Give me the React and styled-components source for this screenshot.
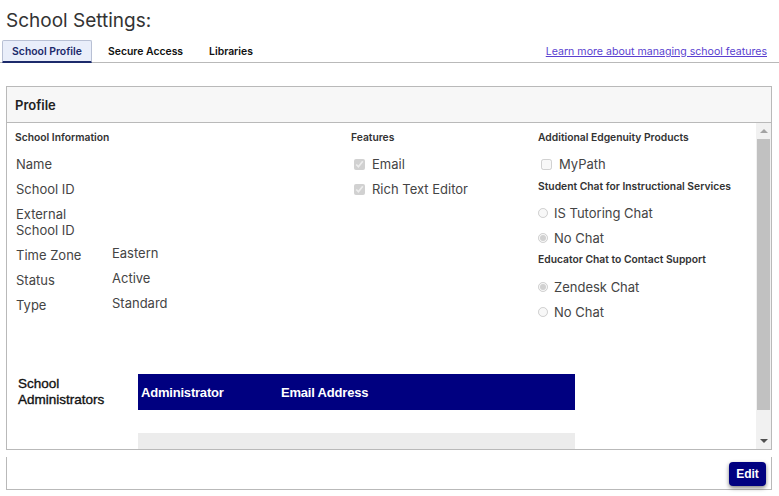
import styled, { createGlobalStyle } from 'styled-components';

const GlobalStyle = createGlobalStyle`
    html, body {
        margin: 0;
        padding: 0;
        background: #ffffff;
        font-family: 'Inter', 'Liberation Sans', sans-serif;
        color: #333333;
    }
`

const infoRows = [
    { label: 'Name', value: '' },
    { label: 'School ID', value: '' },
    { label: 'External School ID', value: '', wrap: true },
    { label: 'Time Zone', value: 'Eastern' },
    { label: 'Status', value: 'Active' },
    { label: 'Type', value: 'Standard' },
]

export default function App() {
    return (
        <>
            <GlobalStyle />
            <Page>
                <Title>School Settings:</Title>
                <TabBar>
                    <Tabs>
                        <Tab active>School Profile</Tab>
                        <Tab>Secure Access</Tab>
                        <Tab>Libraries</Tab>
                    </Tabs>
                    <LearnLink href="#">Learn more about managing school features</LearnLink>
                </TabBar>

                <Panel>
                    <PanelHeader>Profile</PanelHeader>
                    <PanelBody>
                        <Content>
                            <Columns>
                                <Column>
                                    <Heading>School Information</Heading>
                                    {infoRows.map(row => (
                                        <InfoRow key={row.label}>
                                            <Label wrap={row.wrap}>{row.label}</Label>
                                            <Value>{row.value}</Value>
                                        </InfoRow>
                                    ))}
                                </Column>
                                <Column>
                                    <Heading>Features</Heading>
                                    <Option>
                                        <Check type="checkbox" checked disabled readOnly />
                                        Email
                                    </Option>
                                    <Option>
                                        <Check type="checkbox" checked disabled readOnly />
                                        Rich Text Editor
                                    </Option>
                                </Column>
                                <Column>
                                    <Heading>Additional Edgenuity Products</Heading>
                                    <Option>
                                        <Check type="checkbox" disabled readOnly />
                                        MyPath
                                    </Option>
                                    <Heading gap={7}>Student Chat for Instructional Services</Heading>
                                    <Option gap={12}>
                                        <Radio type="radio" name="is" disabled readOnly />
                                        IS Tutoring Chat
                                    </Option>
                                    <Option>
                                        <Radio type="radio" name="is" checked disabled readOnly />
                                        No Chat
                                    </Option>
                                    <Heading gap={6}>Educator Chat to Contact Support</Heading>
                                    <Option gap={13}>
                                        <Radio type="radio" name="ed" checked disabled readOnly />
                                        Zendesk Chat
                                    </Option>
                                    <Option>
                                        <Radio type="radio" name="ed" disabled readOnly />
                                        No Chat
                                    </Option>
                                </Column>
                            </Columns>

                            <Admins>
                                <AdminLabel>School<br />Administrators</AdminLabel>
                                <AdminTable>
                                    <TableHead>
                                        <HeadCell>Administrator</HeadCell>
                                        <HeadCell>Email Address</HeadCell>
                                    </TableHead>
                                    <TableRow />
                                </AdminTable>
                            </Admins>
                        </Content>

                        <ScrollBar>
                            <ScrollButton>
                                <Arrow up />
                            </ScrollButton>
                            <Track>
                                <Thumb />
                            </Track>
                            <ScrollButton>
                                <Arrow />
                            </ScrollButton>
                        </ScrollBar>
                    </PanelBody>
                </Panel>

                <Footer>
                    <EditButton>Edit</EditButton>
                </Footer>
            </Page>
        </>
    )
}

const Page = styled.div`
    width: 779px;
    height: 496px;
    overflow: hidden;
`

const Title = styled.h1`
    margin: 0;
    padding: 8px 6px 0;
    height: 33px;
    box-sizing: border-box;
    font-size: 19px;
    font-weight: 400;
    line-height: 26px;
    color: #333333;
`

const TabBar = styled.div`
    display: flex;
    align-items: flex-end;
    justify-content: space-between;
    border-bottom: 1px solid #b9b9b9;
    padding: 7px 12px 0 2px;
`

const Tabs = styled.div`
    display: flex;
`

const Tab = styled.div`
    height: 23px;
    box-sizing: border-box;
    padding: 0 ${p => p.active ? '0' : '12px'};
    margin-right: ${p => p.active ? '3px' : '0'};
    display: flex;
    align-items: center;
    justify-content: center;
    white-space: nowrap;
    font-size: 10.4px;
    font-weight: 600;
    color: ${p => p.active ? '#1c2a6b' : '#111111'};
    background: ${p => p.active ? '#e9eefa' : 'transparent'};
    border: 1px solid ${p => p.active ? '#b8c0d4' : 'transparent'};
    border-bottom: ${p => p.active ? '2px solid #1c2a6b' : '1px solid transparent'};
    border-radius: 2px 2px 0 0;
    margin-bottom: -1px;
    width: ${p => p.active ? '90px' : 'auto'};
`

const LearnLink = styled.a`
    font-size: 10.6px;
    color: #5a3fd0;
    text-decoration: underline;
    margin-bottom: 4px;
`

const Panel = styled.div`
    margin: 23px 7px 0 6px;
    border: 1px solid #b9b9b9;
`

const PanelHeader = styled.div`
    height: 35px;
    background: #f7f7f7;
    border-bottom: 1px solid #b9b9b9;
    display: flex;
    align-items: center;
    padding-left: 8px;
    font-size: 13px;
    font-weight: 600;
    color: #222222;
`

const PanelBody = styled.div`
    height: 326px;
    display: flex;
`

const Content = styled.div`
    flex: 1;
    overflow: hidden;
    padding: 7px 0 0 8px;
`

const ScrollBar = styled.div`
    width: 15px;
    background: #f1f1f1;
    display: flex;
    flex-direction: column;
`

const ScrollButton = styled.div`
    height: 16px;
    display: flex;
    align-items: center;
    justify-content: center;
`

const Arrow = styled.div`
    width: 0;
    height: 0;
    border-left: 4px solid transparent;
    border-right: 4px solid transparent;
    ${p => p.up
        ? 'border-bottom: 4px solid #a3a3a3;'
        : 'border-top: 4px solid #505050;'}
`

const Track = styled.div`
    flex: 1;
    padding: 0 1px;
    display: flex;
    flex-direction: column;
`

const Thumb = styled.div`
    height: 271px;
    background: #c1c1c1;
`

const Columns = styled.div`
    display: grid;
    grid-template-columns: 336px 187px 1fr;
`

const Column = styled.div`
    display: flex;
    flex-direction: column;
`

const Heading = styled.div`
    font-size: 10.3px;
    font-weight: 600;
    line-height: 14px;
    color: #333333;
    margin-top: ${p => p.gap || 0}px;
`

const InfoRow = styled.div`
    display: flex;
    align-items: flex-start;
    margin-top: 9px;
    ${Heading} + & {
        margin-top: 12px;
    }
    font-size: 13px;
    line-height: 16px;
    color: #444444;
`

const Label = styled.div`
    width: 97px;
    padding-left: 1px;
    box-sizing: border-box;
    white-space: ${p => p.wrap ? 'normal' : 'nowrap'};
    ${p => p.wrap && 'max-width: 80px;'}
`

const Value = styled.div`
    margin-top: -2px;
`

const Option = styled.label`
    display: flex;
    align-items: center;
    font-size: 13px;
    line-height: 16px;
    color: #444444;
    margin-top: ${p => p.gap || 9}px;
    &:nth-child(2) {
        margin-top: 12px;
    }
`

const Check = styled.input`
    width: 11px;
    height: 11px;
    margin: 0 7px 0 3px;
`

const Radio = styled.input`
    width: 10px;
    height: 10px;
    margin: 0 6px 0 0;
`

const Admins = styled.div`
    display: flex;
    margin-top: 54px;
`

const AdminLabel = styled.div`
    width: 123px;
    box-sizing: border-box;
    padding-left: 3px;
    height: 36px;
    display: flex;
    align-items: center;
    font-family: 'Liberation Sans', Arial, sans-serif;
    font-size: 13.5px;
    font-weight: 400;
    line-height: 16px;
    color: #111111;
    -webkit-text-stroke: 0.35px #111111;
`

const AdminTable = styled.div`
    width: 437px;
`

const TableHead = styled.div`
    height: 36px;
    background: #000080;
    display: flex;
    align-items: center;
`

const HeadCell = styled.div`
    width: 140px;
    padding-left: 3px;
    box-sizing: border-box;
    font-family: 'Liberation Sans', Arial, sans-serif;
    font-size: 13px;
    font-weight: 700;
    letter-spacing: -0.2px;
    color: #ffffff;
`

const TableRow = styled.div`
    height: 30px;
    margin-top: 23px;
    background: #ececec;
`

const Footer = styled.div`
    margin: 7px 7px 0 6px;
    height: 32px;
    border: 1px solid #b9b9b9;
    border-top: none;
    display: flex;
    justify-content: flex-end;
    align-items: center;
    padding-right: 5px;
`

const EditButton = styled.button`
    width: 37px;
    height: 24px;
    background: #000080;
    color: #ffffff;
    border: none;
    border-radius: 4px;
    box-shadow: 0 2px 4px rgba(0, 0, 0, 0.5);
    font-family: 'Liberation Sans', Arial, sans-serif;
    font-size: 12px;
    font-weight: 700;
    padding: 0;
    margin-top: 2px;
`
